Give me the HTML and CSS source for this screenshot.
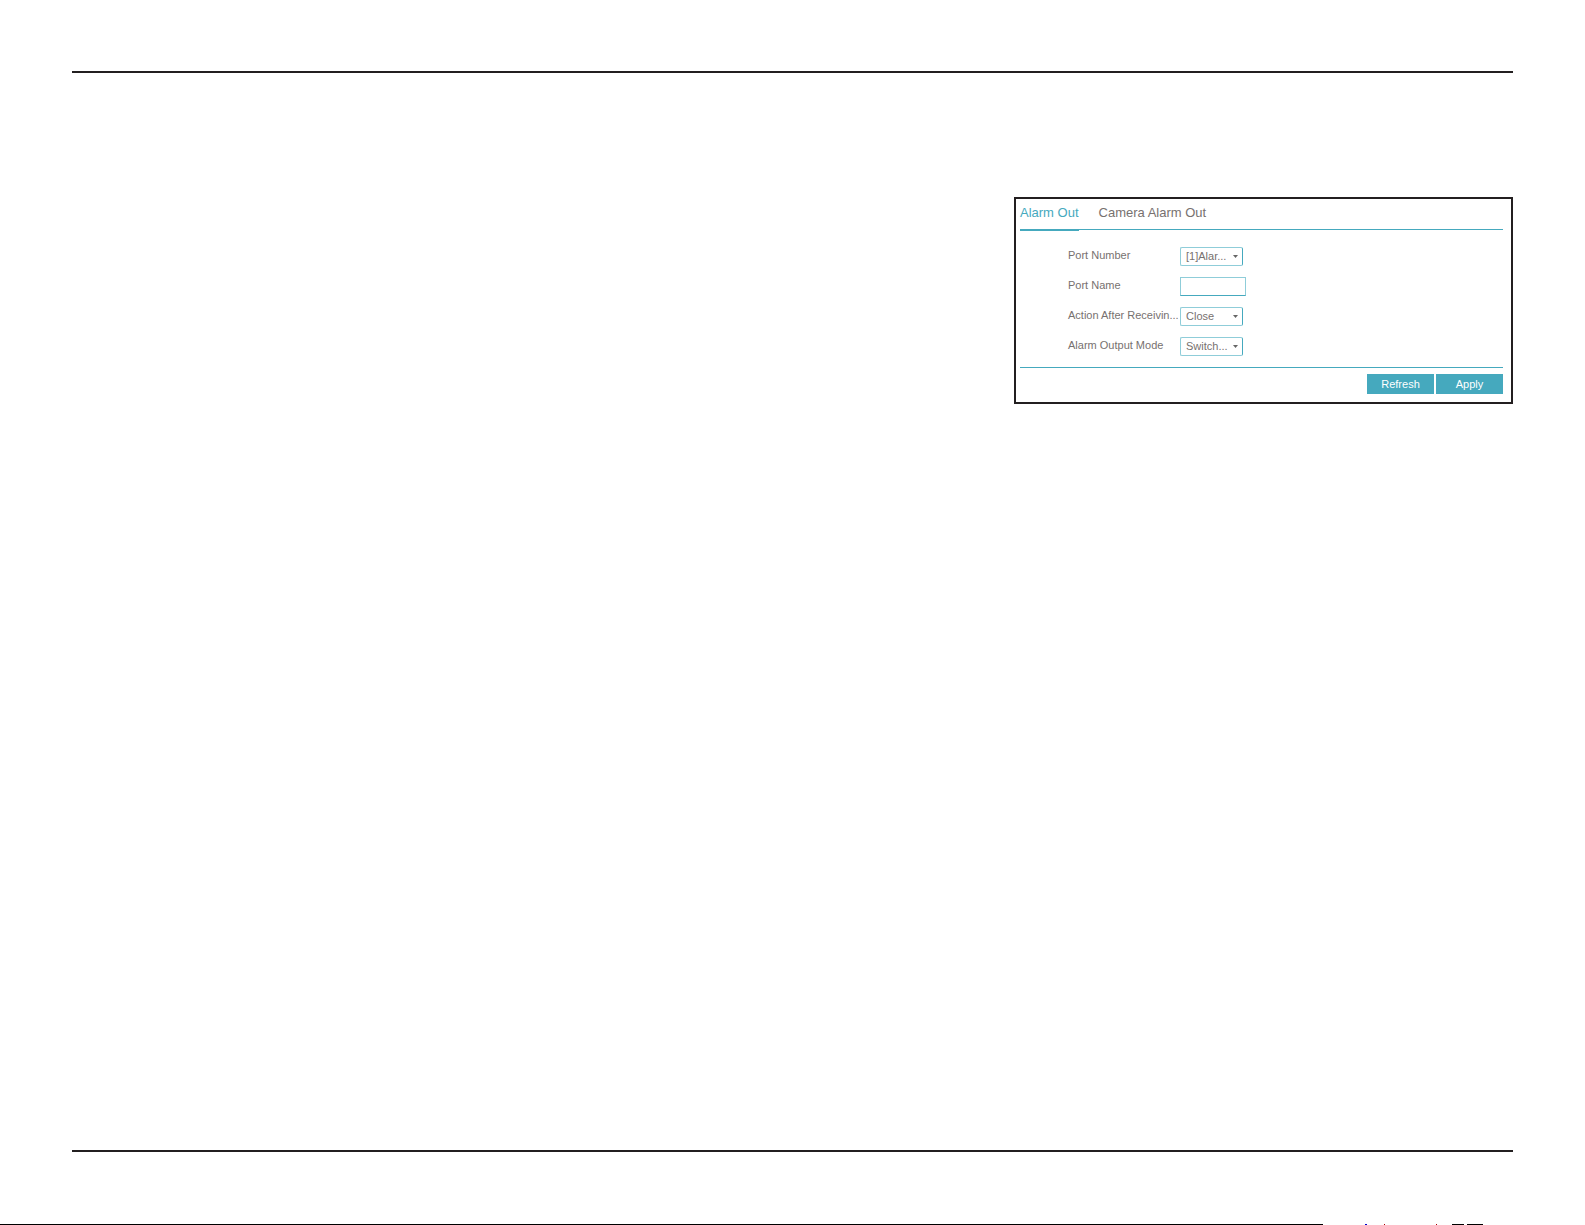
FILE: index.html
```html
<!DOCTYPE html>
<html lang="en">
<head>
  <meta charset="UTF-8">
  <meta name="viewport" content="width=device-width, initial-scale=1.0">
  <title>Alarm Out</title>
  <link rel="stylesheet" href="styles.css">
</head>
<body>
  <div class="page">
    <main class="content">
      <section class="panel">
        <nav class="tabs">
          <a href="#alarm-out" class="tab active">Alarm Out</a>
          <a href="#camera-alarm-out" class="tab">Camera Alarm Out</a>
        </nav>

        <form class="alarm-form">
          <div class="form-group">
            <label for="portNumber">Port Number</label>
            <select id="portNumber">
              <option>[1]Alar...</option>
            </select>
          </div>
          <div class="form-group">
            <label for="portName">Port Name</label>
            <input type="text" id="portName">
          </div>
          <div class="form-group">
            <label for="actionAfter">Action After Receivin...</label>
            <select id="actionAfter">
              <option>Close</option>
            </select>
          </div>
          <div class="form-group">
            <label for="outputMode">Alarm Output Mode</label>
            <select id="outputMode">
              <option>Switch...</option>
            </select>
          </div>

          <!-- Action Buttons -->
          <div class="action-buttons">
            <button type="button">Refresh</button>
            <button type="button">Apply</button>
          </div>
        </form>
      </section>
    </main>
  </div>
  <div class="edge"></div>
</body>
</html>
```

FILE: styles.css
```css
* {
  box-sizing: border-box;
}
body {
  display: flex;
  flex-direction: column;
  min-height: 100vh;
  margin: 0;
  background-color: white;
  font-family: "Liberation Sans", Arial, sans-serif;
  font-size: 11px;
  color: #77716f;
}
.page {
  display: flex;
  flex: 1;
  padding: 71px 72px 72px;
}
.content {
  flex: 1;
  padding-top: 124px;
  border-top: 2px solid #231f20;
  border-bottom: 2px solid #231f20;
}
.panel {
  width: 499px;
  max-width: 100%;
  margin-left: auto;
  padding: 0 8px 8px 4px;
  border: 2px solid #231f20;
}
.tabs {
  display: flex;
  gap: 20px;
  height: 31px;
  border-bottom: 1px solid #45a9be;
}
.tab {
  height: 32px;
  font-size: 13px;
  line-height: 28px;
  color: #77716f;
  text-decoration: none;
}
.tab.active {
  color: #45a9be;
  border-bottom: 2px solid #45a9be;
}
.alarm-form {
  padding-top: 17px;
}
.form-group {
  display: flex;
  align-items: flex-start;
  height: 30px;
  padding-left: 48px;
}
.form-group label {
  width: 112px;
  line-height: 16px;
  white-space: nowrap;
}
.form-group select,
.form-group input {
  height: 19px;
  padding: 0 5px;
  border: 1px solid #8fcdd9;
  font: inherit;
  color: inherit;
}
.form-group select {
  width: 63px;
  padding: 0 0 1px 5px;
  appearance: none;
  border-right-color: #45a9be;
  border-radius: 2px;
  background: url("data:image/svg+xml,%3Csvg xmlns='http://www.w3.org/2000/svg' width='5' height='3'%3E%3Cpath d='M0 0h5L2.5 3z' fill='%23666'/%3E%3C/svg%3E") no-repeat right 4px center;
}
.form-group input {
  width: 66px;
  border-bottom-color: #45a9be;
}
.action-buttons {
  display: flex;
  justify-content: flex-end;
  gap: 2px;
  padding-top: 6px;
  border-top: 1px solid #45a9be;
}
.action-buttons button {
  width: 67px;
  height: 20px;
  padding: 0;
  background-color: #45a9be;
  color: white;
  border: none;
  font: inherit;
}
.edge {
  height: 1px;
  background: linear-gradient(to right, #000 1323px, transparent 1323px 1365px, #00c 1365px 1367px, transparent 1367px 1384px, #a00 1384px 1385px, transparent 1385px 1436px, #a00 1436px 1437px, transparent 1437px 1452px, #000 1452px 1464px, transparent 1464px 1467px, #000 1467px 1483px, transparent 1483px);
}
```
